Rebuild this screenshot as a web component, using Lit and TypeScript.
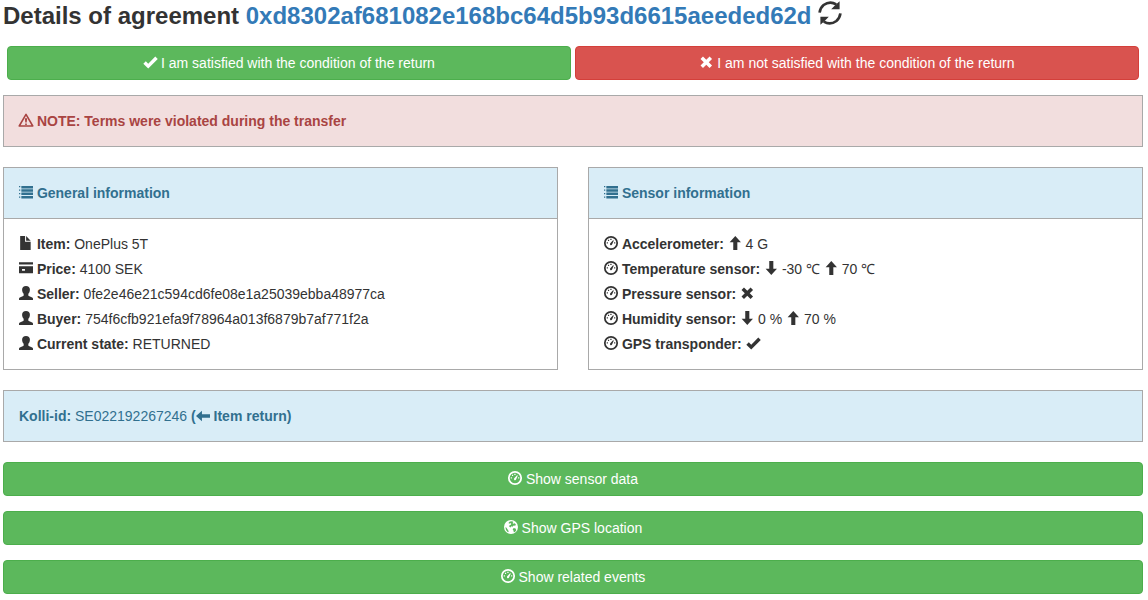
import { LitElement, html, css, svg } from "lit";
import { customElement, property } from "lit/decorators.js";

// Shapes are drawn on a 1200-unit em with the y axis pointing up.
const shapes: Record<string, string> = {
  ok: "M29 454l419 -420l818 820l-212 212l-607 -607l-206 207z",
  remove:
    "M1118 865l-282 -282l282 -282l-212 -212l-282 282l-282 -282l-212 212l282 282l-282 282l212 212l282 -282l282 282z",
  list: "M0 1110h110v-110h-110zM200 1120h1000v-220h-1000zM0 810h110v-110h-110zM200 840h1000v-220h-1000zM0 520h110v-110h-110zM200 555h1000v-220h-1000zM0 220h110v-110h-110zM200 260h1000v-220h-1000z",
  file: "M100 1200h420v-500h480v-700h-900zM610 1200l390 -400h-390z",
  card: "M0 1100h1200v-200h-1200zM0 740h1200v-540q0 -50 -50 -50h-1100q-50 0 -50 50zM260 515v-150h250v150z",
  user: "M600 1200q160 0 250 -90t85 -240q0 -90 -35 -190q-35 -90 -100 -150v-120q0 -45 40 -75l290 -115q70 -35 70 -110v-110h-1200v110q0 75 70 110l290 115q40 30 40 75v120q-65 60 -100 150q-35 100 -35 190q-5 150 85 240t250 90z",
  up: "M625 1200l485 -530h-310v-660h-350v660h-310z",
  down: "M625 10l485 530h-310v660h-350v-660h-310z",
  left: "M0 520l510 450v-300h690v-300h-690v-300z",
};

@customElement("glyph-icon")
export class GlyphIcon extends LitElement {
  @property() name = "ok";

  static styles = css`
    :host { display: inline-block; width: 1em; height: 1em; vertical-align: -1px; line-height: 1; }
    .icon { display: block; width: 100%; height: 100%; overflow: visible; fill: currentColor; }
    .line { fill: none; stroke: currentColor; }
  `;

  private shape() {
    switch (this.name) {
      case "dashboard":
        return svg`<circle class="line" cx="600" cy="600" r="530" stroke-width="150"></circle>
          <path d="M540 970h110v-110h-110zM340 870h100v-100h-100zM235 660h100v-100h-100zM865 660h100v-100h-100zM520 550q-30 -90 40 -140q100 -30 130 60l150 350l-65 25z"></path>`;
      case "globe":
        return svg`<path fill-rule="evenodd" d="M600 1200a600 600 0 0 0 0 -1200a600 600 0 0 0 0 1200zM500 1080l190 10l120 -60l-80 -90l60 -60l130 50l100 -110l-60 -120l-130 20l-100 -90l-110 30l-60 -100l-110 60l20 120l120 50l30 90l-90 60l-60 -60l-90 70zM140 600l90 -90l60 -100l60 -60l50 -150l-50 -40q-110 70 -170 180q-60 120 -40 260zM830 510l160 -40l60 -150l-110 -140l-100 -40l-30 160l-70 90z"></path>`;
      case "warning":
        return svg`<path class="line" d="M600 1080L20 85h1160z" stroke-width="135" stroke-linejoin="round"></path>
          <path d="M500 760h200l-40 -380h-120zM530 310h140v-130h-140z"></path>`;
      case "refresh":
        return svg`<path class="line" d="M80 620q30 240 200 380q320 230 630 30M1120 580q-30 -240 -200 -380q-320 -230 -630 -30" stroke-width="135"></path>
          <path d="M1080 1190v-400h-420l170 170zM120 10v400h420l-170 -170z"></path>`;
      default:
        return svg`<path d=${shapes[this.name]} fill-rule="evenodd"></path>`;
    }
  }

  render() {
    return html`<svg class="icon" viewBox="0 0 1200 1200" aria-hidden="true">
      <g transform="translate(0 1200) scale(1 -1)">${this.shape()}</g>
    </svg>`;
  }
}

const icon = (name: string) => html`<glyph-icon name=${name}></glyph-icon>`;

@customElement("app-root")
export class AppRoot extends LitElement {
  static styles = css`
    :host {
      display: block; box-sizing: border-box; height: 600px; overflow: hidden;
      padding: 1px 5px 0 3px; background: #fff; color: #333;
      font: 14px/20px "Liberation Sans", Arial, sans-serif;
    }
    * { box-sizing: border-box; }
    .title { margin: 0; height: 45px; font-size: 24px; line-height: 26px; font-weight: 700; white-space: nowrap; }
    .link { color: #337ab7; text-decoration: none; }
    .choices { display: grid; grid-template-columns: 1fr 1fr; gap: 4px; padding: 0 4px; margin-bottom: 15px; }
    .btn {
      display: block; width: 100%; height: 34px; margin: 0; padding: 6px 12px;
      border: 1px solid #4cae4c; border-radius: 4px; background: #5cb85c; color: #fff;
      font: inherit; text-align: center;
    }
    .reject { background: #d9534f; border-color: #d43f3a; }
    .banner { height: 52px; padding: 15px; border: 1px solid #a9a9a9; margin-bottom: 20px; }
    .danger { background: #f2dede; color: #a94442; font-weight: 700; }
    .info { background: #d9edf7; color: #31708f; }
    .panels { display: grid; grid-template-columns: 1fr 1fr; gap: 30px; margin-bottom: 20px; }
    .panel { border: 1px solid #a9a9a9; height: 203px; }
    .head { height: 51px; padding: 15px; border-bottom: 1px solid #a9a9a9; font-weight: 700; }
    .body { display: flex; flex-direction: column; gap: 5px; padding: 15px; white-space: nowrap; }
    .actions { display: flex; flex-direction: column; gap: 15px; }
  `;

  render() {
    return html`
      <h1 class="title">Details of agreement <a class="link">0xd8302af681082e168bc64d5b93d6615aeeded62d</a> ${icon("refresh")}</h1>
      <div class="choices">
        <button class="btn">${icon("ok")} I am satisfied with the condition of the return</button>
        <button class="btn reject">${icon("remove")} I am not satisfied with the condition of the return</button>
      </div>
      <div class="banner danger">${icon("warning")} NOTE: Terms were violated during the transfer</div>
      <div class="panels">
        <section class="panel">
          <div class="head info">${icon("list")} General information</div>
          <div class="body">
            <div>${icon("file")} <b>Item:</b> OnePlus 5T</div>
            <div>${icon("card")} <b>Price:</b> 4100 SEK</div>
            <div>${icon("user")} <b>Seller:</b> 0fe2e46e21c594cd6fe08e1a25039ebba48977ca</div>
            <div>${icon("user")} <b>Buyer:</b> 754f6cfb921efa9f78964a013f6879b7af771f2a</div>
            <div>${icon("user")} <b>Current state:</b> RETURNED</div>
          </div>
        </section>
        <section class="panel">
          <div class="head info">${icon("list")} Sensor information</div>
          <div class="body">
            <div>${icon("dashboard")} <b>Accelerometer:</b> ${icon("up")} 4 G</div>
            <div>${icon("dashboard")} <b>Temperature sensor:</b> ${icon("down")} -30 ℃ ${icon("up")} 70 ℃</div>
            <div>${icon("dashboard")} <b>Pressure sensor:</b> ${icon("remove")}</div>
            <div>${icon("dashboard")} <b>Humidity sensor:</b> ${icon("down")} 0 % ${icon("up")} 70 %</div>
            <div>${icon("dashboard")} <b>GPS transponder:</b> ${icon("ok")}</div>
          </div>
        </section>
      </div>
      <div class="banner info"><b>Kolli-id:</b> SE022192267246 <b>(${icon("left")} Item return)</b></div>
      <div class="actions">
        <button class="btn">${icon("dashboard")} Show sensor data</button>
        <button class="btn">${icon("globe")} Show GPS location</button>
        <button class="btn">${icon("dashboard")} Show related events</button>
      </div>
    `;
  }
}
